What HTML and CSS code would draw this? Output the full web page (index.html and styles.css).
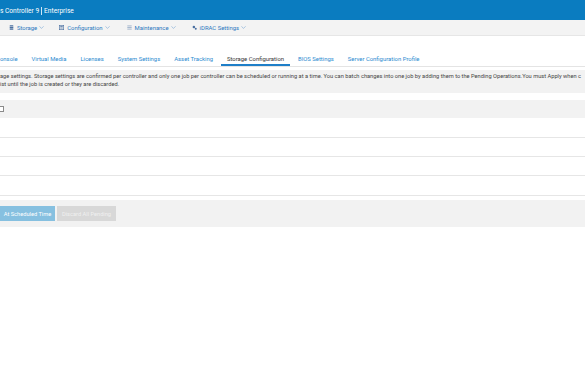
FILE: index.html
```html
<!DOCTYPE html>
<html>
<head>
<meta charset="utf-8">
<link rel="stylesheet" href="styles.css">
</head>
<body>
<header class="brand">
  <span class="brand-name">s Controller 9</span><span class="brand-sep"></span><span class="brand-ed">Enterprise</span>
</header>
<nav class="menu">
  <a class="menu-item m-storage">
    <svg class="ico" viewBox="0 0 8 8"><rect x="1" y="0.5" width="6" height="2" rx="0.6" fill="#4a6fa0"/><rect x="1" y="3" width="6" height="2" rx="0.6" fill="#4a6fa0"/><rect x="1" y="5.5" width="6" height="2" rx="0.6" fill="#4a6fa0"/></svg>
    Storage<svg class="chev" viewBox="0 0 8 5"><path d="M0.5 0.5 L4 4 L7.5 0.5" fill="none" stroke="#6a9fd0" stroke-width="0.9"/></svg>
  </a>
  <a class="menu-item m-config">
    <svg class="ico" viewBox="0 0 8 8"><rect x="0.5" y="0.5" width="7" height="7" fill="none" stroke="#4a6fa0" stroke-width="1"/><rect x="2" y="2" width="4" height="1.2" fill="#4a6fa0"/><rect x="2" y="4.2" width="4" height="1.2" fill="#4a6fa0"/></svg>
    Configuration<svg class="chev" viewBox="0 0 8 5"><path d="M0.5 0.5 L4 4 L7.5 0.5" fill="none" stroke="#6a9fd0" stroke-width="0.9"/></svg>
  </a>
  <a class="menu-item m-maint">
    <svg class="ico" viewBox="0 0 8 8"><rect x="0.5" y="1" width="7" height="1" fill="#7a95b8"/><rect x="0.5" y="3.5" width="7" height="1" fill="#7a95b8"/><rect x="0.5" y="6" width="7" height="1" fill="#7a95b8"/></svg>
    Maintenance<svg class="chev" viewBox="0 0 8 5"><path d="M0.5 0.5 L4 4 L7.5 0.5" fill="none" stroke="#6a9fd0" stroke-width="0.9"/></svg>
  </a>
  <a class="menu-item m-idrac">
    <svg class="ico" viewBox="0 0 8 8"><circle cx="3" cy="3" r="2" fill="#4a6fa0"/><circle cx="6" cy="5.8" r="1.6" fill="#4a6fa0"/></svg>
    iDRAC Settings<svg class="chev" viewBox="0 0 8 5"><path d="M0.5 0.5 L4 4 L7.5 0.5" fill="none" stroke="#6a9fd0" stroke-width="0.9"/></svg>
  </a>
</nav>
<div class="tabs">
  <a class="tab">onsole</a>
  <a class="tab">Virtual Media</a>
  <a class="tab">Licenses</a>
  <a class="tab">System Settings</a>
  <a class="tab">Asset Tracking</a>
  <a class="tab active">Storage Configuration</a>
  <a class="tab">BIOS Settings</a>
  <a class="tab">Server Configuration Profile</a>
</div>
<div class="info">
  <p>age settings. Storage settings are confirmed per controller and only one job per controller can be scheduled or running at a time. You can batch changes into one job by adding them to the Pending Operations.You must Apply when c</p>
  <p>ist until the job is created or they are discarded.</p>
</div>
<div class="table">
  <div class="thead"><span class="chk"></span></div>
  <div class="row tall"></div>
  <div class="row"></div>
  <div class="row"></div>
  <div class="row tall"></div>
</div>
<div class="actions">
  <button class="btn btn-primary">At Scheduled Time</button>
  <button class="btn btn-disabled">Discard All Pending</button>
</div>
</body>
</html>
```
FILE: styles.css
```css
html, body {
  margin: 0;
  padding: 0;
  background: #ffffff;
  font-family: Roboto, "Liberation Sans", sans-serif;
  overflow: hidden;
  width: 585px;
  height: 390px;
}
.brand {
  height: 20px;
  background: #0a7cc0;
  color: #ffffff;
  font-size: 6.6px;
  display: flex;
  align-items: center;
  white-space: nowrap;
  padding-top: 1px;
  box-sizing: border-box;
}
.brand-sep {
  display: inline-block;
  width: 1px;
  height: 8px;
  background: #d0e6f5;
  margin: 0 2px 0 2px;
}
.menu {
  height: 15px;
  background: #f3f3f3;
  border-bottom: 1px solid #e6e6e6;
  display: flex;
  align-items: center;
  padding-left: 9px;
  font-size: 5.9px;
  color: #2a78c0;
  white-space: nowrap;
}
.menu-item {
  display: flex;
  align-items: center;
}
.ico {
  width: 5px;
  height: 5px;
  margin-right: 3px;
}
.chev {
  width: 5px;
  height: 3px;
  margin-left: 2px;
}
.m-storage { margin-right: 15px; }
.m-config { margin-right: 17px; }
.m-maint { margin-right: 16px; }
.tabs {
  margin-top: 20px;
  margin-left: -7px;
  height: 10px;
  border-bottom: 1px solid #e4e4e4;
  display: flex;
  align-items: flex-start;
  font-size: 5.9px;
  white-space: nowrap;
}
.tab {
  color: #2b8bd0;
  padding: 0 6px 1px 6px;
  margin: 0 1px;
  line-height: 7px;
  border-bottom: 2px solid transparent;
}
.tab.active {
  color: #333333;
  border-bottom-color: #1f7fc8;
}
.info {
  margin-top: 3px;
  background: #f2f2f2;
  padding: 3px 0 5px 0;
  font-size: 5.7px;
  color: #444444;
  white-space: nowrap;
  line-height: 7.5px;
}
.info p { margin: 0; }
.table {
  margin-top: 7px;
}
.thead {
  height: 18px;
  background: #f2f2f2;
  display: flex;
  align-items: center;
}
.chk {
  display: block;
  width: 3px;
  height: 4px;
  border: 1px solid #8a8a8a;
  border-left: none;
  background: #ffffff;
}
.row {
  height: 18px;
  border-bottom: 1px solid #e6e6e6;
}
.row.tall { height: 19px; }
.actions {
  margin-top: 4px;
  height: 27px;
  background: #f2f2f2;
  display: flex;
  align-items: center;
  gap: 2px;
}
.btn {
  font-family: Roboto, "Liberation Sans", sans-serif;
  font-size: 5.7px;
  height: 15px;
  border: none;
  color: #ffffff;
  margin: 0;
  padding: 0;
  white-space: nowrap;
  text-align: center;
  box-sizing: border-box;
}
.btn-primary {
  background: #86c0e0;
  width: 55px;
}
.btn-disabled {
  background: #d8d8d8;
  color: #f0f0f0;
  width: 59px;
}
```
